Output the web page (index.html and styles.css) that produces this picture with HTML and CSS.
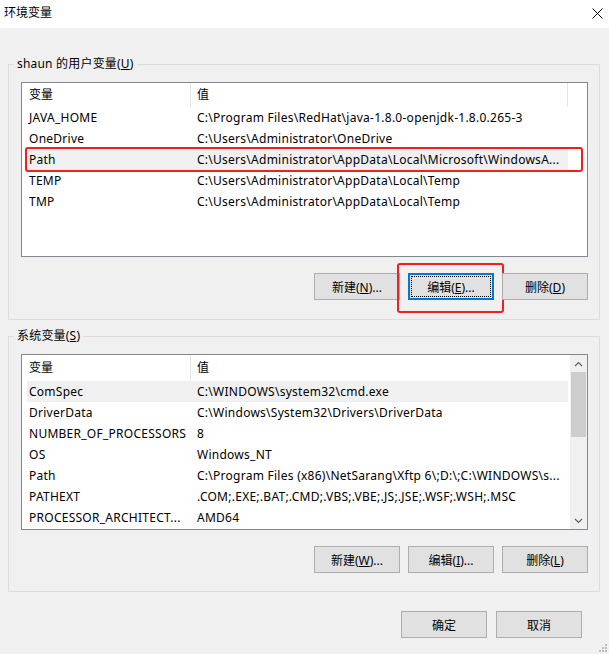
FILE: index.html
```html
<!DOCTYPE html>
<html lang="zh-CN">
<head>
<meta charset="utf-8">
<title>环境变量</title>
<link rel="stylesheet" href="styles.css">
</head>
<body>
<div class="window">
  <div class="titlebar">
    <span class="title">环境变量</span>
    <svg class="close" width="11" height="11" viewBox="0 0 11 11"><path d="M0.5 0.5 L10.5 10.5 M10.5 0.5 L0.5 10.5" stroke="#000" stroke-width="1" fill="none"/></svg>
  </div>
  <div class="content">
    <fieldset class="group group-user">
      <legend class="legend">shaun 的用户变量(<u>U</u>)</legend>
      <div class="list list-user">
        <div class="header">
          <div class="hc1">变量</div>
          <div class="hc2">值</div>
        </div>
        <div class="row"><div class="c1">JAVA_HOME</div><div class="c2">C:\Program Files\RedHat\java-1.8.0-openjdk-1.8.0.265-3</div></div>
        <div class="row"><div class="c1">OneDrive</div><div class="c2">C:\Users\Administrator\OneDrive</div></div>
        <div class="row sel"><div class="c1">Path</div><div class="c2">C:\Users\Administrator\AppData\Local\Microsoft\WindowsA...</div>
          <div class="mark mark-row"></div>
        </div>
        <div class="row"><div class="c1">TEMP</div><div class="c2">C:\Users\Administrator\AppData\Local\Temp</div></div>
        <div class="row"><div class="c1">TMP</div><div class="c2">C:\Users\Administrator\AppData\Local\Temp</div></div>
      </div>
      <div class="btns">
        <button class="btn">新建(<u>N</u>)...</button>
        <button class="btn focus">编辑(<u>E</u>)...<span class="mark mark-btn"></span></button>
        <button class="btn">删除(<u>D</u>)</button>
      </div>
    </fieldset>

    <fieldset class="group group-sys">
      <legend class="legend">系统变量(<u>S</u>)</legend>
      <div class="list list-sys">
        <div class="list-main">
          <div class="header">
            <div class="hc1">变量</div>
            <div class="hc2 noright">值</div>
          </div>
          <div class="row sel"><div class="c1">ComSpec</div><div class="c2">C:\WINDOWS\system32\cmd.exe</div></div>
          <div class="row"><div class="c1">DriverData</div><div class="c2">C:\Windows\System32\Drivers\DriverData</div></div>
          <div class="row"><div class="c1">NUMBER_OF_PROCESSORS</div><div class="c2">8</div></div>
          <div class="row"><div class="c1">OS</div><div class="c2">Windows_NT</div></div>
          <div class="row"><div class="c1">Path</div><div class="c2">C:\Program Files (x86)\NetSarang\Xftp 6\;D:\;C:\WINDOWS\s...</div></div>
          <div class="row"><div class="c1">PATHEXT</div><div class="c2">.COM;.EXE;.BAT;.CMD;.VBS;.VBE;.JS;.JSE;.WSF;.WSH;.MSC</div></div>
          <div class="row"><div class="c1">PROCESSOR_ARCHITECT...</div><div class="c2">AMD64</div></div>
        </div>
        <div class="scrollbar">
          <div class="sb-arrow"><svg width="9" height="6" viewBox="0 0 9 6"><path d="M1 5 L4.5 1.5 L8 5" stroke="#606060" stroke-width="1.2" fill="none"/></svg></div>
          <div class="sb-track"><div class="sb-thumb"></div></div>
          <div class="sb-arrow"><svg width="9" height="6" viewBox="0 0 9 6"><path d="M1 1 L4.5 4.5 L8 1" stroke="#606060" stroke-width="1.2" fill="none"/></svg></div>
        </div>
      </div>
      <div class="btns">
        <button class="btn">新建(<u>W</u>)...</button>
        <button class="btn">编辑(<u>I</u>)...</button>
        <button class="btn">删除(<u>L</u>)</button>
      </div>
    </fieldset>

    <div class="footer">
      <button class="btn">确定</button>
      <button class="btn">取消</button>
    </div>
  </div>
  <svg class="grip" width="8" height="8" viewBox="0 0 8 8">
    <rect x="6" y="0" width="2" height="2" fill="#bcbcbc"/>
    <rect x="3" y="3" width="2" height="2" fill="#bcbcbc"/>
    <rect x="6" y="3" width="2" height="2" fill="#bcbcbc"/>
    <rect x="0" y="6" width="2" height="2" fill="#bcbcbc"/>
    <rect x="3" y="6" width="2" height="2" fill="#bcbcbc"/>
    <rect x="6" y="6" width="2" height="2" fill="#bcbcbc"/>
  </svg>
</div>
</body>
</html>
```

FILE: styles.css
```css
* { box-sizing: border-box; }
html, body { margin: 0; padding: 0; }
body {
  background: #f0f0f0;
  font-family: "Noto Sans", "Noto Sans CJK SC", sans-serif;
  font-size: 12px;
  color: #000;
}
.window {
  position: relative;
  width: 609px;
  height: 654px;
  background: #f0f0f0;
  overflow: hidden;
}
.titlebar {
  height: 28px;
  background: #fff;
  display: flex;
  align-items: center;
  justify-content: space-between;
  padding: 0 6px 2px 4px;
}
.title { font-size: 12px; line-height: 16px; }
.close { margin-top: 1px; }
.content {
  padding: 28px 9px 0 8px;
}
.group {
  margin: 0;
  border: 1px solid #dcdcdc;
  padding: 10px 11px 18px 12px;
  min-width: 0;
}
.legend {
  padding: 0 3px;
  margin-left: -7px;
  line-height: 16px;
  font-size: 12px;
  letter-spacing: 0.2px;
}
.group-user { height: 264px; margin-top: 0; }
.group-sys { margin-top: 8px; height: 264px; }
.list {
  background: #fff;
  border: 1px solid #828790;
  overflow: hidden;
}
.list-user { height: 175px; position: relative; overflow: visible; }
.list-sys { height: 176px; display: flex; }
.list-main { flex: 1; }
.header {
  display: grid;
  grid-template-columns: 168px 378px;
  height: 24px;
  align-items: stretch;
}
.hc1 { padding-left: 7px; line-height: 24px; }
.hc2 {
  padding-left: 6px;
  line-height: 24px;
  border-left: 1px solid #e5e5e5;
  border-right: 1px solid #e5e5e5;
}
.hc2.noright { border-right: none; }
.list-sys .header { height: 26px; }
.list-sys .hc1, .list-sys .hc2 { line-height: 26px; }
.row {
  position: relative;
  display: grid;
  grid-template-columns: 163px 378px;
  margin-left: 5px;
  width: 541px;
  height: 21px;
  line-height: 21px;
  white-space: nowrap;
  letter-spacing: 0.26px;
}
.row .c1 { padding-left: 2px; overflow: hidden; }
.row .c2 { padding-left: 7px; overflow: hidden; }
.row.sel { background: #f0f0f0; }
.mark {
  position: absolute;
  border: 2px solid #f21f1f;
  border-radius: 3px;
  pointer-events: none;
}
.mark-row { left: -2px; top: -2px; width: 558px; height: 25px; }
.scrollbar {
  width: 17px;
  display: flex;
  flex-direction: column;
  background: #f0f0f0;
}
.sb-arrow {
  height: 17px;
  display: flex;
  align-items: center;
  justify-content: center;
}
.sb-track { flex: 1; }
.sb-thumb { height: 65px; background: #cdcdcd; margin: 0 1px; }
.btns {
  display: flex;
  justify-content: flex-end;
  gap: 8px;
  margin-top: 16px;
}
.btn {
  position: relative;
  width: 86px;
  height: 27px;
  background: #e1e1e1;
  border: 1px solid #adadad;
  font-family: inherit;
  font-size: 12px;
  color: #000;
  padding: 0;
  margin: 0;
}
.btn.focus {
  border: 2px solid #0078d7;
  outline: 1px dotted #000;
  outline-offset: -4px;
}
.mark-btn { left: -13px; top: -12px; width: 107px; height: 50px; }
.footer {
  display: flex;
  justify-content: flex-end;
  gap: 9px;
  margin-top: 19px;
  padding-right: 18px;
}
.grip { position: absolute; right: 2px; bottom: 2px; }
```
